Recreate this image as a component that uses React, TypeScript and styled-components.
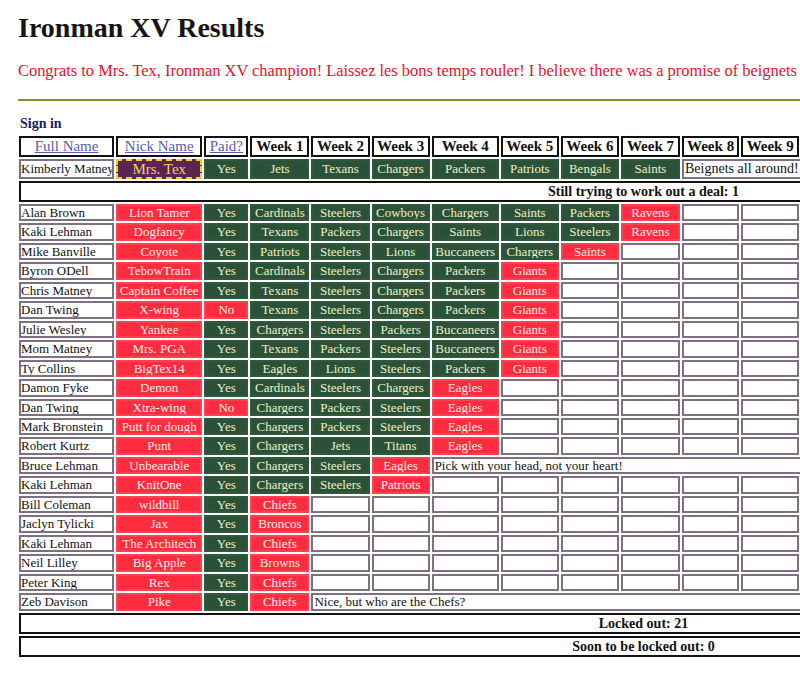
import React from "react";
import styled, { createGlobalStyle, css } from "styled-components";

const Global = createGlobalStyle`
  html, body {
    margin: 0;
    padding: 0;
    background: #ffffff;
    overflow: hidden;
  }
  body {
    font-family: "Liberation Serif", "Times New Roman", serif;
    color: #111111;
  }
`;

const Page = styled.div`
  padding-left: 18px;
  width: 1300px;
`;

const Title = styled.h1`
  margin: 12px 0 0;
  font-size: 28px;
  line-height: 32px;
  font-weight: bold;
  color: #151515;
`;

const Message = styled.p`
  margin: 18px 0 0;
  font-size: 16.4px;
  line-height: 18px;
  color: #e3132c;
  white-space: nowrap;
`;

const Rule = styled.hr`
  margin: 19px 0 0;
  width: 800px;
  height: 0;
  border: none;
  border-top: 2px solid #8f8f24;
`;

const SignIn = styled.div`
  margin: 15px 0 0 2px;
  font-size: 14px;
  line-height: 16px;
  font-weight: bold;
  color: #1c1c62;
`;

const Board = styled.table`
  margin: 2px 0 0 -1px;
  border-collapse: separate;
  border-spacing: 2px;
  table-layout: fixed;
  width: 1253px;
  font-size: 13px;
`;

const Col = styled.col<{ $w: number }>`
  width: ${(p) => p.$w}px;
`;

const HeadCell = styled.th<{ $link?: boolean }>`
  border: 2px solid #111111;
  background: #ffffff;
  padding: 0;
  font-size: 15px;
  line-height: 17px;
  white-space: nowrap;
  overflow: hidden;
  text-align: center;
  ${(p) =>
    p.$link
      ? css`
          font-weight: normal;
          color: #5a5aa8;
          text-decoration: underline;
        `
      : css`
          font-weight: bold;
          color: #111111;
        `}
`;

type Tone = "red" | "green" | "blank";

const toneStyles = {
  red: css`
    background: #ff2b3e;
    border-color: #ff4252;
    color: #fff2f0;
  `,
  green: css`
    background: #2b5238;
    border-color: #2f583d;
    color: #eef0c6;
  `,
  blank: css`
    background: #ffffff;
    border-color: #7d7080;
    color: #111111;
  `,
};

const Cell = styled.td<{ $tone: Tone }>`
  border: 2px solid;
  padding: 0;
  line-height: 13.45px;
  height: 13.45px;
  text-align: center;
  white-space: nowrap;
  overflow: hidden;
  ${(p) => toneStyles[p.$tone]}
`;

const TopCell = styled(Cell)`
  line-height: 16px;
  height: 16px;
`;

const NameCell = styled.td<{ $tall?: boolean }>`
  border: 2px solid #7d7080;
  background: #ffffff;
  padding: 0;
  text-align: left;
  white-space: nowrap;
  overflow: hidden;
  line-height: ${(p) => (p.$tall ? "16px" : "13.45px")};
  height: ${(p) => (p.$tall ? "16px" : "13.45px")};
`;

const NoteCell = styled.td<{ $big?: boolean }>`
  border: 2px solid #7d7080;
  background: #ffffff;
  padding: 0 1px;
  text-align: left;
  white-space: nowrap;
  overflow: hidden;
  font-size: ${(p) => (p.$big ? "14px" : "13px")};
  line-height: ${(p) => (p.$big ? "16px" : "13.45px")};
`;

const ChampCell = styled.td`
  border: 2px dashed #f2cc2a;
  background: #5c2452;
  color: #f0cf74;
  padding: 0;
  font-size: 15px;
  line-height: 16px;
  text-align: center;
  white-space: nowrap;
`;

const BannerCell = styled.td`
  border: 2px solid #111111;
  background: #ffffff;
  padding: 0;
  font-size: 14px;
  font-weight: bold;
  line-height: 17px;
  height: 17px;
  text-align: center;
  white-space: nowrap;
`;

const WEEKS = 17;
const colWidths = [
  95, 86, 44, 59, 58, 58, 67, 58, 58, 59, 57, 58,
  56.5, 56.5, 56.5, 56.5, 56.5, 56.5, 56.5, 56.5,
];
const TOTAL_COLS = 3 + WEEKS;

type Entry = {
  name: string;
  nick: string;
  paid: "Yes" | "No";
  wins: string[];
  loss: string;
  note?: string;
};

const entries: Entry[] = [
  { name: "Alan Brown", nick: "Lion Tamer", paid: "Yes", wins: ["Cardinals", "Steelers", "Cowboys", "Chargers", "Saints", "Packers"], loss: "Ravens" },
  { name: "Kaki Lehman", nick: "Dogfancy", paid: "Yes", wins: ["Texans", "Packers", "Chargers", "Saints", "Lions", "Steelers"], loss: "Ravens" },
  { name: "Mike Banville", nick: "Coyote", paid: "Yes", wins: ["Patriots", "Steelers", "Lions", "Buccaneers", "Chargers"], loss: "Saints" },
  { name: "Byron ODell", nick: "TebowTrain", paid: "Yes", wins: ["Cardinals", "Steelers", "Chargers", "Packers"], loss: "Giants" },
  { name: "Chris Matney", nick: "Captain Coffee", paid: "Yes", wins: ["Texans", "Steelers", "Chargers", "Packers"], loss: "Giants" },
  { name: "Dan Twing", nick: "X-wing", paid: "No", wins: ["Texans", "Steelers", "Chargers", "Packers"], loss: "Giants" },
  { name: "Julie Wesley", nick: "Yankee", paid: "Yes", wins: ["Chargers", "Steelers", "Packers", "Buccaneers"], loss: "Giants" },
  { name: "Mom Matney", nick: "Mrs. PGA", paid: "Yes", wins: ["Texans", "Packers", "Steelers", "Buccaneers"], loss: "Giants" },
  { name: "Ty Collins", nick: "BigTex14", paid: "Yes", wins: ["Eagles", "Lions", "Steelers", "Packers"], loss: "Giants" },
  { name: "Damon Fyke", nick: "Demon", paid: "Yes", wins: ["Cardinals", "Steelers", "Chargers"], loss: "Eagles" },
  { name: "Dan Twing", nick: "Xtra-wing", paid: "No", wins: ["Chargers", "Packers", "Steelers"], loss: "Eagles" },
  { name: "Mark Bronstein", nick: "Putt for dough", paid: "Yes", wins: ["Chargers", "Packers", "Steelers"], loss: "Eagles" },
  { name: "Robert Kurtz", nick: "Punt", paid: "Yes", wins: ["Chargers", "Jets", "Titans"], loss: "Eagles" },
  { name: "Bruce Lehman", nick: "Unbearable", paid: "Yes", wins: ["Chargers", "Steelers"], loss: "Eagles", note: "Pick with your head, not your heart!" },
  { name: "Kaki Lehman", nick: "KnitOne", paid: "Yes", wins: ["Chargers", "Steelers"], loss: "Patriots" },
  { name: "Bill Coleman", nick: "wildbill", paid: "Yes", wins: [], loss: "Chiefs" },
  { name: "Jaclyn Tylicki", nick: "Jax", paid: "Yes", wins: [], loss: "Broncos" },
  { name: "Kaki Lehman", nick: "The Architech", paid: "Yes", wins: [], loss: "Chiefs" },
  { name: "Neil Lilley", nick: "Big Apple", paid: "Yes", wins: [], loss: "Browns" },
  { name: "Peter King", nick: "Rex", paid: "Yes", wins: [], loss: "Chiefs" },
  { name: "Zeb Davison", nick: "Pike", paid: "Yes", wins: [], loss: "Chiefs", note: "Nice, but who are the Chefs?" },
];

const champPicks = ["Jets", "Texans", "Chargers", "Packers", "Patriots", "Bengals", "Saints"];

function EntryRow({ e }: { e: Entry }) {
  const used = e.wins.length + 1;
  const rest = WEEKS - used;
  return (
    <tr>
      <NameCell>{e.name}</NameCell>
      <Cell $tone="red">{e.nick}</Cell>
      <Cell $tone={e.paid === "Yes" ? "green" : "red"}>{e.paid}</Cell>
      {e.wins.map((w, i) => (
        <Cell key={i} $tone="green">
          {w}
        </Cell>
      ))}
      <Cell $tone="red">{e.loss}</Cell>
      {e.note ? (
        <NoteCell colSpan={rest}>{e.note}</NoteCell>
      ) : (
        Array.from({ length: rest }).map((_, i) => <Cell key={`b${i}`} $tone="blank" />)
      )}
    </tr>
  );
}

export default function App() {
  return (
    <>
      <Global />
      <Page>
        <Title>Ironman XV Results</Title>
        <Message>
          Congrats to Mrs. Tex, Ironman XV champion! Laissez les bons temps rouler! I believe there was a
          promise of beignets
        </Message>
        <Rule />
        <SignIn>Sign in</SignIn>
        <Board>
          <colgroup>
            {colWidths.map((w, i) => (
              <Col key={i} $w={w} />
            ))}
          </colgroup>
          <tbody>
            <tr>
              <HeadCell $link>Full Name</HeadCell>
              <HeadCell $link>Nick Name</HeadCell>
              <HeadCell $link>Paid?</HeadCell>
              {Array.from({ length: WEEKS }).map((_, i) => (
                <HeadCell key={i}>Week {i + 1}</HeadCell>
              ))}
            </tr>
            <tr>
              <NameCell $tall>Kimberly Matney</NameCell>
              <ChampCell>Mrs. Tex</ChampCell>
              <TopCell $tone="green">Yes</TopCell>
              {champPicks.map((p, i) => (
                <TopCell key={i} $tone="green">
                  {p}
                </TopCell>
              ))}
              <NoteCell $big colSpan={WEEKS - champPicks.length}>
                Beignets all around!
              </NoteCell>
            </tr>
            <tr>
              <BannerCell colSpan={TOTAL_COLS}>Still trying to work out a deal: 1</BannerCell>
            </tr>
            {entries.map((e, i) => (
              <EntryRow key={i} e={e} />
            ))}
            <tr>
              <BannerCell colSpan={TOTAL_COLS}>Locked out: 21</BannerCell>
            </tr>
            <tr>
              <BannerCell colSpan={TOTAL_COLS}>Soon to be locked out: 0</BannerCell>
            </tr>
          </tbody>
        </Board>
      </Page>
    </>
  );
}
